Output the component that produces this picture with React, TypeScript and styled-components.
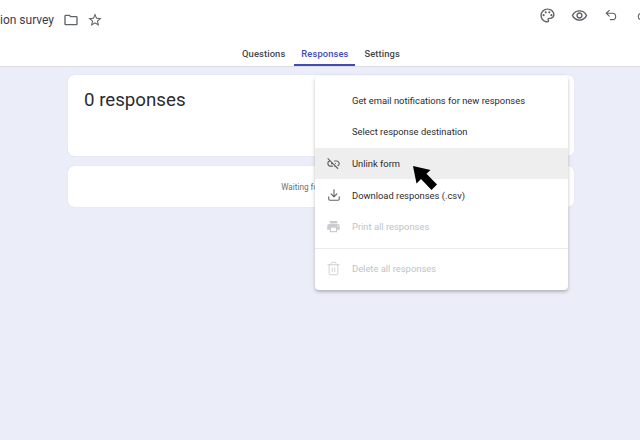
import React from 'react';
import styled, { createGlobalStyle } from 'styled-components';
import { Download, Redo2, Trash2, Undo2 } from 'lucide-react';
import {
  MdLinkOff,
  MdOutlineFolder,
  MdOutlinePalette,
  MdOutlineRemoveRedEye,
  MdPrint,
  MdStarBorder,
} from 'react-icons/md';

const GlobalStyle = createGlobalStyle`
  html, body {
    margin: 0;
    height: 100%;
    overflow: hidden;
    background: #ebedf8;
    font-family: Roboto, "Liberation Sans", sans-serif;
  }
`;

const tabs = ['Questions', 'Responses', 'Settings'];

const menuItems = [
  { label: 'Get email notifications for new responses' },
  { label: 'Select response destination' },
  { label: 'Unlink form', icon: <MdLinkOff />, active: true },
  { label: 'Download responses (.csv)', icon: <Download size={14} strokeWidth={1.9} /> },
  { label: 'Print all responses', icon: <MdPrint />, disabled: true },
];

function App() {
  return (
    <Page>
      <GlobalStyle />
      <Header>
        <TopBar>
          <TitleGroup>
            <Title>ion survey</Title>
            <TitleIcon>
              <MdOutlineFolder />
            </TitleIcon>
            <TitleIcon>
              <MdStarBorder />
            </TitleIcon>
          </TitleGroup>
          <Actions>
            <ActionIcon>
              <MdOutlinePalette />
            </ActionIcon>
            <ActionIcon>
              <MdOutlineRemoveRedEye />
            </ActionIcon>
            <ActionIcon>
              <Undo2 size={14} strokeWidth={1.9} />
            </ActionIcon>
            <ActionIcon>
              <Redo2 size={14} strokeWidth={1.9} />
            </ActionIcon>
          </Actions>
        </TopBar>
        <Tabs>
          {tabs.map((tab) => (
            <Tab key={tab} $active={tab === 'Responses'}>
              {tab}
            </Tab>
          ))}
        </Tabs>
      </Header>
      <Content>
        <SummaryCard>
          <Heading>0 responses</Heading>
        </SummaryCard>
        <WaitingCard>Waiting for responses</WaitingCard>
        <Menu>
          {menuItems.map((item) => (
            <MenuRow key={item.label} $active={item.active} $disabled={item.disabled}>
              <MenuIcon $disabled={item.disabled}>{item.icon}</MenuIcon>
              {item.label}
            </MenuRow>
          ))}
          <Divider />
          <MenuRow $disabled>
            <MenuIcon $disabled>
              <Trash2 size={15} strokeWidth={1.4} />
            </MenuIcon>
            Delete all responses
          </MenuRow>
        </Menu>
        <Cursor viewBox="0 0 28 28" aria-hidden="true">
          <path d="M2 2 L5.5 19.5 L10 15 L20.5 26 L26 20.5 L15.5 9.8 L19.5 6 Z" fill="#000" />
        </Cursor>
      </Content>
    </Page>
  );
}

const Page = styled.div`
  width: 640px;
  height: 440px;
  overflow: hidden;
  background: #ebedf8;
`;

const Header = styled.header`
  height: 66px;
  background: #fff;
  border-bottom: 1px solid #dcdde3;
`;

const TopBar = styled.div`
  height: 39px;
  display: flex;
  justify-content: space-between;
  align-items: flex-start;
`;

const TitleGroup = styled.div`
  display: flex;
  align-items: center;
  height: 39px;
`;

const Title = styled.span`
  font-size: 12px;
  color: #3c4043;
  width: 59px;
  white-space: nowrap;
`;

const TitleIcon = styled.span`
  width: 24px;
  display: flex;
  justify-content: center;
  font-size: 16px;
  color: #5f6368;
`;

const Actions = styled.div`
  display: flex;
  gap: 12px;
  padding-top: 5px;
  margin-right: -13px;
`;

const ActionIcon = styled.span`
  width: 20px;
  height: 20px;
  display: flex;
  align-items: center;
  justify-content: center;
  font-size: 17px;
  color: #5f6368;
`;

const Tabs = styled.nav`
  height: 27px;
  display: flex;
  justify-content: center;
  gap: 2px;
  padding-left: 2px;
`;

const Tab = styled.div<{ $active?: boolean }>`
  padding: 9px 7px 0;
  height: 27px;
  box-sizing: border-box;
  line-height: 12px;
  font-size: 9.4px;
  font-weight: 500;
  letter-spacing: 0.1px;
  color: ${(p) => (p.$active ? '#3f4db0' : '#44474b')};
  border-bottom: 2px solid ${(p) => (p.$active ? '#3f4db0' : 'transparent')};
`;

const Content = styled.main`
  position: relative;
  width: 506px;
  margin-left: 68px;
  padding-top: 8px;
`;

const SummaryCard = styled.section`
  height: 81px;
  background: #fff;
  border-radius: 6px;
  box-shadow: 0 0 1px rgba(60, 64, 67, 0.2);
  padding: 13px 16px 0;
  box-sizing: border-box;
`;

const Heading = styled.h1`
  margin: 0;
  font-size: 18.7px;
  line-height: 24px;
  font-weight: 400;
  color: #2a2c2f;
`;

const WaitingCard = styled.section`
  height: 41px;
  margin-top: 10px;
  background: #fff;
  border-radius: 6px;
  box-shadow: 0 0 1px rgba(60, 64, 67, 0.2);
  display: flex;
  align-items: center;
  justify-content: center;
  font-size: 8.2px;
  color: #6b6f74;
`;

const Menu = styled.div`
  position: absolute;
  left: 247px;
  top: 9px;
  width: 253px;
  padding: 8.4px 0 6px;
  background: #fff;
  border-radius: 4px;
  box-shadow: 0 2px 3px rgba(60, 64, 67, 0.28), 0 1px 6px rgba(60, 64, 67, 0.08);
`;

const MenuRow = styled.div<{ $active?: boolean; $disabled?: boolean }>`
  height: 31.7px;
  display: flex;
  align-items: center;
  font-size: 9.4px;
  color: ${(p) => (p.$disabled ? '#c0c3c8' : '#2a2c2f')};
  background: ${(p) => (p.$active ? '#eeeeee' : 'transparent')};
`;

const MenuIcon = styled.span<{ $disabled?: boolean }>`
  width: 37px;
  display: flex;
  justify-content: center;
  font-size: 15px;
  color: ${(p) => (p.$disabled ? '#c9ccd0' : '#5f6368')};
`;

const Divider = styled.div`
  height: 1px;
  margin: 5.4px 0 3px;
  background: #e8eaed;
`;

const Cursor = styled.svg`
  position: absolute;
  left: 343px;
  top: 97px;
  width: 28px;
  height: 28px;
`;

export default App;
